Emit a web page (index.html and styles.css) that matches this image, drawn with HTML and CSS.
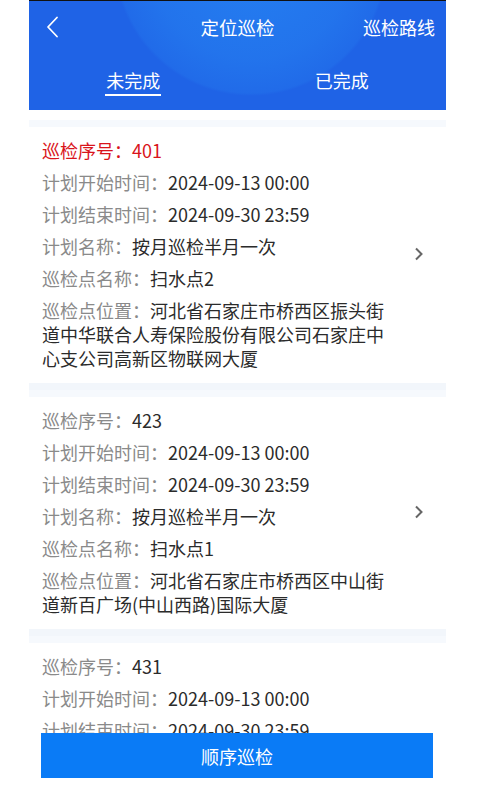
FILE: index.html
```html
<!DOCTYPE html>
<html lang="zh-CN">
<head>
<meta charset="utf-8">
<title>定位巡检</title>
<link rel="stylesheet" href="styles.css">
</head>
<body>
<div class="app">
  <header class="header">
    <div class="nav">
      <span class="back">
        <svg width="13" height="22" viewBox="0 0 13 22"><path d="M11 1.5 L2 11 L11 20.5" fill="none" stroke="#fff" stroke-width="1.8" stroke-linecap="round" stroke-linejoin="round"/></svg>
      </span>
      <span class="title">定位巡检</span>
      <span class="route">巡检路线</span>
    </div>
    <div class="tabs">
      <div class="tab"><span class="tab-text active">未完成</span></div>
      <div class="tab"><span class="tab-text">已完成</span></div>
    </div>
  </header>

  <main class="list">
    <section class="card">
      <div class="info">
        <p class="row red"><span>巡检序号：</span><span>401</span></p>
        <p class="row"><span class="label">计划开始时间：</span><span class="value">2024-09-13 00:00</span></p>
        <p class="row"><span class="label">计划结束时间：</span><span class="value">2024-09-30 23:59</span></p>
        <p class="row"><span class="label">计划名称：</span><span class="value">按月巡检半月一次</span></p>
        <p class="row"><span class="label">巡检点名称：</span><span class="value">扫水点2</span></p>
        <p class="row"><span class="label">巡检点位置：</span><span class="value">河北省石家庄市桥西区振头街道中华联合人寿保险股份有限公司石家庄中心支公司高新区物联网大厦</span></p>
      </div>
      <div class="arrow"><svg width="10" height="14" viewBox="0 0 10 14"><path d="M2 1.5 L7.5 7 L2 12.5" fill="none" stroke="#666" stroke-width="2" stroke-linejoin="miter"/></svg></div>
    </section>

    <section class="card">
      <div class="info">
        <p class="row"><span class="label">巡检序号：</span><span class="value">423</span></p>
        <p class="row"><span class="label">计划开始时间：</span><span class="value">2024-09-13 00:00</span></p>
        <p class="row"><span class="label">计划结束时间：</span><span class="value">2024-09-30 23:59</span></p>
        <p class="row"><span class="label">计划名称：</span><span class="value">按月巡检半月一次</span></p>
        <p class="row"><span class="label">巡检点名称：</span><span class="value">扫水点1</span></p>
        <p class="row"><span class="label">巡检点位置：</span><span class="value">河北省石家庄市桥西区中山街道新百广场(中山西路)国际大厦</span></p>
      </div>
      <div class="arrow"><svg width="10" height="14" viewBox="0 0 10 14"><path d="M2 1.5 L7.5 7 L2 12.5" fill="none" stroke="#666" stroke-width="2" stroke-linejoin="miter"/></svg></div>
    </section>

    <section class="card">
      <div class="info">
        <p class="row"><span class="label">巡检序号：</span><span class="value">431</span></p>
        <p class="row"><span class="label">计划开始时间：</span><span class="value">2024-09-13 00:00</span></p>
        <p class="row"><span class="label">计划结束时间：</span><span class="value">2024-09-30 23:59</span></p>
        <p class="row"><span class="label">计划名称：</span><span class="value">按月巡检半月一次</span></p>
        <p class="row"><span class="label">巡检点名称：</span><span class="value">扫水点3</span></p>
        <p class="row"><span class="label">巡检点位置：</span><span class="value">河北省石家庄市桥西区中山街道新百广场国际大厦</span></p>
      </div>
      <div class="arrow"><svg width="10" height="14" viewBox="0 0 10 14"><path d="M2 1.5 L7.5 7 L2 12.5" fill="none" stroke="#666" stroke-width="2" stroke-linejoin="miter"/></svg></div>
    </section>
  </main>

  <footer class="footer">
    <button class="btn">顺序巡检</button>
  </footer>
</div>
</body>
</html>
```

FILE: styles.css
```css
* { box-sizing: border-box; }
html, body { margin: 0; padding: 0; background: #fff; }
body {
  font-family: "Noto Sans CJK SC", "Noto Sans", sans-serif;
  width: 480px;
  height: 800px;
  overflow: hidden;
}
.app {
  width: 417px;
  height: 800px;
  margin-left: 29px;
  display: flex;
  flex-direction: column;
  background: #fff;
}
.header {
  flex: 0 0 110px;
  border-top: 1px solid #111;
  background-color: #1f63e6;
  background-image: radial-gradient(circle at 222px -42px, rgba(40,145,248,0.6) 0, rgba(38,132,242,0.5) 100px, rgba(36,122,238,0.35) 134px, rgba(31,99,230,0) 137px);
  color: #fff;
  display: flex;
  flex-direction: column;
}
.nav {
  height: 52px;
  display: flex;
  align-items: center;
  position: relative;
  padding: 0 11px 0 17px;
}
.back { display: flex; align-items: center; width: 20px; }
.title {
  position: absolute;
  left: 0; right: 0;
  text-align: center;
  font-size: 18.5px;
  line-height: 24px;
  pointer-events: none;
}
.route {
  margin-left: auto;
  font-size: 18px;
  line-height: 24px;
}
.tabs {
  display: flex;
  padding-top: 15px;
}
.tab {
  flex: 1;
  display: flex;
  justify-content: center;
}
.tab-text {
  font-size: 18px;
  line-height: 24px;
  padding: 0 1px 2px;
  border-bottom: 2px solid transparent;
}
.tab-text.active { border-bottom-color: #fff; }

.list {
  flex: 1;
  overflow: hidden;
  padding-top: 10px;
}
.card {
  display: flex;
  background: #fff;
  border-top: 7px solid #f6f9fd;
  border-bottom: 7px solid #f2f6fb;
  padding: 11px 0 13px 13px;
}
.info {
  width: 352px;
  display: flex;
  flex-direction: column;
  gap: 8px;
}
.row {
  margin: 0;
  font-size: 18px;
  line-height: 24px;
  color: #333;
}
.row .label { color: #8a8a8a; }
.row .value { color: #2b2b2b; }
.row.red { color: #d9141b; }
.arrow {
  flex: 1;
  display: flex;
  align-items: center;
  justify-content: center;
  padding-right: 2px;
}
.footer {
  flex: 0 0 67px;
  background: #fff;
  padding: 0 13px 22px 12px;
}
.btn {
  width: 100%;
  height: 45px;
  border: 0;
  border-radius: 0;
  background: #0a7bf6;
  color: #fff;
  font-family: "Noto Sans CJK SC", "Noto Sans", sans-serif;
  font-size: 18px;
  padding: 0;
}
```
